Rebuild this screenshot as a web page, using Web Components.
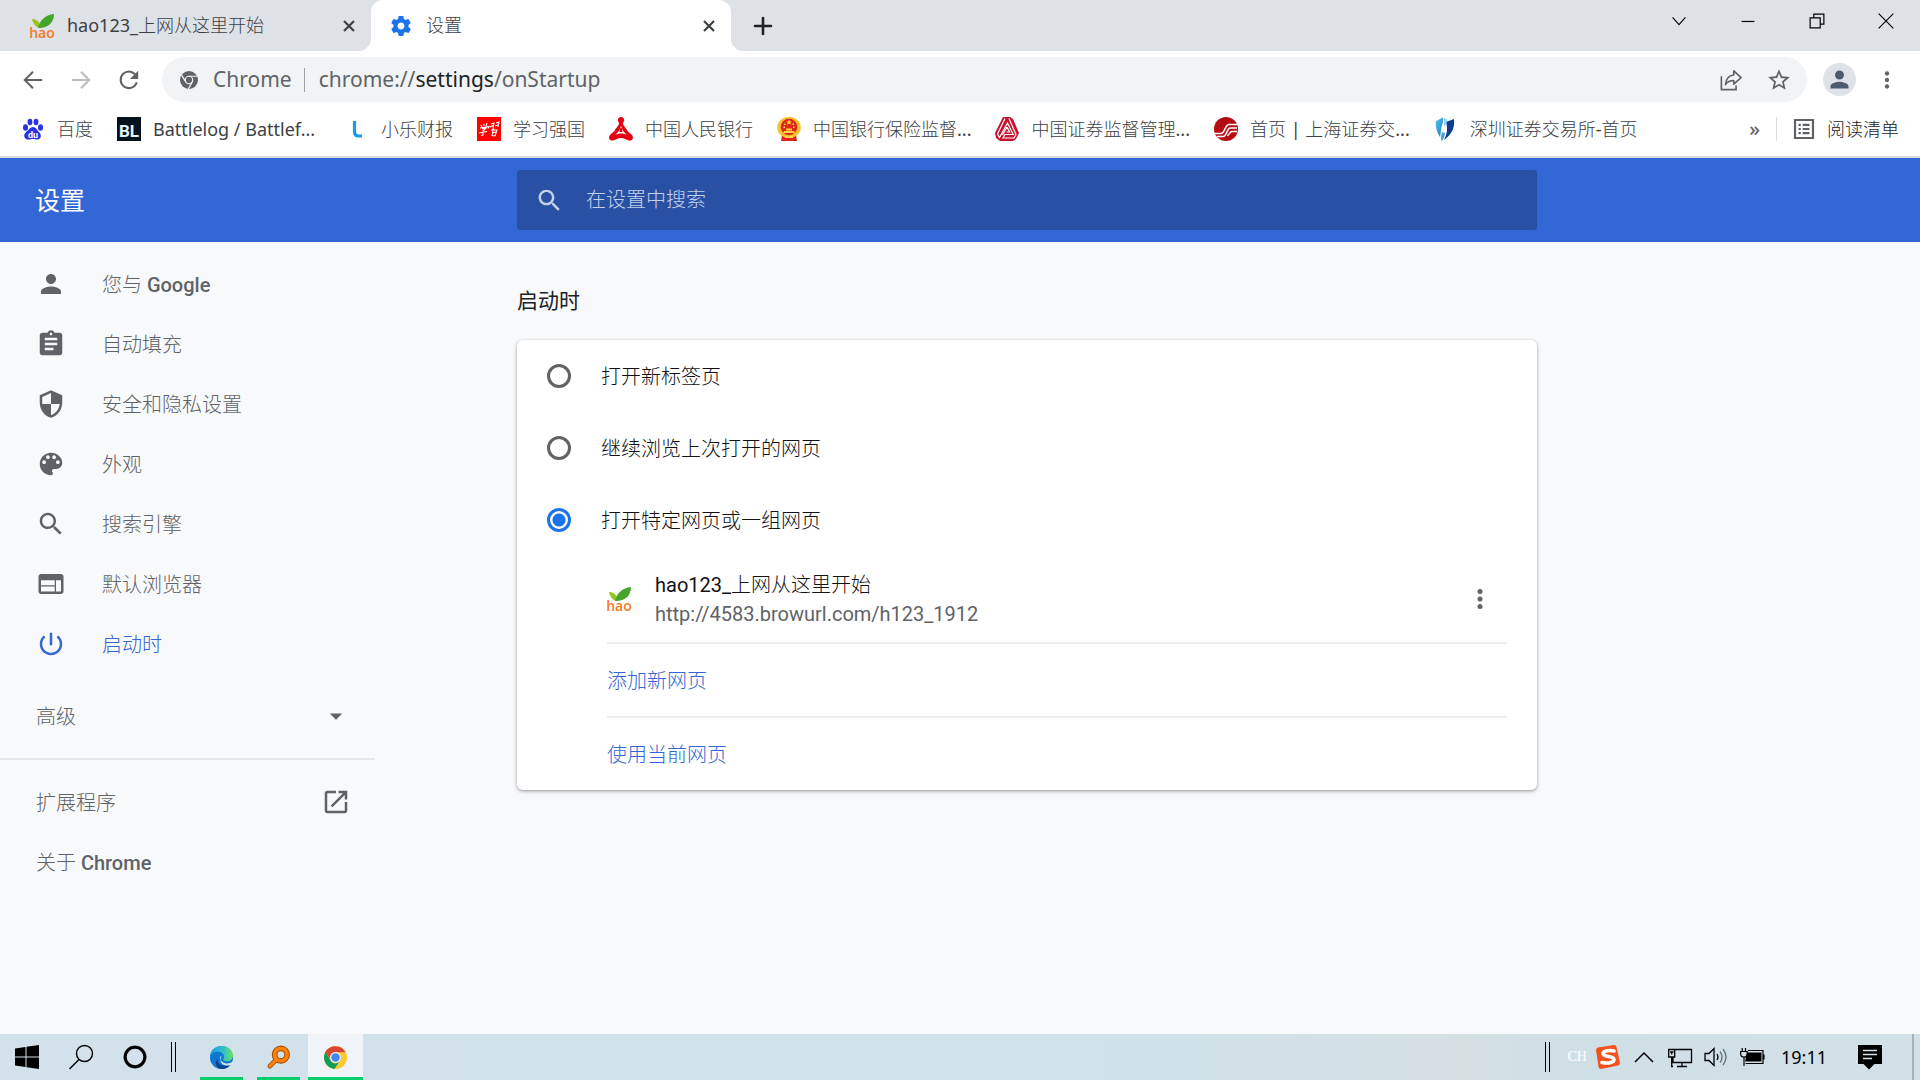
<!DOCTYPE html>
<html lang="zh-CN">
<head>
<meta charset="utf-8">
<title>设置</title>
<style>
html,body{height:100%;margin:0}
body{font-family:"Noto Sans","Noto Sans CJK SC",sans-serif;background:#f8f9fb;color:#202124}
</style>
</head>
<body>
<browser-window></browser-window>
<script>
const ICONS={
person:['0 0 24 24','<path fill="currentColor" d="M12 12c2.21 0 4-1.79 4-4s-1.79-4-4-4-4 1.79-4 4 1.79 4 4 4zm0 2c-2.67 0-8 1.34-8 4v2h16v-2c0-2.66-5.33-4-8-4z"/>'],
assignment:['0 0 24 24','<path fill="currentColor" d="M19 3h-4.18C14.4 1.84 13.3 1 12 1c-1.3 0-2.4.84-2.82 2H5c-1.1 0-2 .9-2 2v14c0 1.1.9 2 2 2h14c1.1 0 2-.9 2-2V5c0-1.1-.9-2-2-2zm-7 0c.55 0 1 .45 1 1s-.45 1-1 1-1-.45-1-1 .45-1 1-1zm2 14H7v-2h7v2zm3-4H7v-2h10v2zm0-4H7V7h10v2z"/>'],
shield:['0 0 24 24','<path fill="currentColor" fill-rule="evenodd" d="M12 1L3 5v6c0 5.55 3.84 10.74 9 12 5.160-1.26 9-6.45 9-12V5l-9-4zM12 3.200V12H5V6.300zM12 12h6.930c-.53 4.120-3.280 7.790-6.930 8.930z"/>'],
palette:['0 0 24 24','<path fill="currentColor" d="M12 3c-4.97 0-9 4.030-9 9s4.030 9 9 9c.83 0 1.500-.67 1.500-1.500 0-.39-.15-.74-.39-1.010-.23-.26-.38-.61-.38-.99 0-.83.67-1.500 1.500-1.500H16c2.760 0 5-2.240 5-5 0-4.420-4.030-8-9-8zm-5.500 9c-.83 0-1.500-.67-1.500-1.500S5.670 9 6.500 9 8 9.670 8 10.500 7.330 12 6.500 12zm3-4C8.670 8 8 7.330 8 6.500S8.670 5 9.500 5s1.500.67 1.500 1.500S10.330 8 9.500 8zm5 0c-.83 0-1.500-.67-1.500-1.500S13.670 5 14.500 5s1.500.67 1.500 1.500S15.330 8 14.500 8zm3 4c-.83 0-1.500-.67-1.500-1.500S16.670 9 17.500 9s1.500.67 1.500 1.500-.67 1.500-1.500 1.500z"/>'],
search:['0 0 24 24','<path fill="currentColor" d="M15.5 14h-.79l-.28-.27C15.41 12.59 16 11.11 16 9.5 16 5.91 13.09 3 9.5 3S3 5.91 3 9.5 5.91 16 9.5 16c1.61 0 3.09-.59 4.23-1.57l.27.28v.79l5 4.99L20.49 19l-4.99-5zm-6 0C7.01 14 5 11.99 5 9.5S7.01 5 9.5 5 14 7.01 14 9.5 11.99 14 9.5 14z"/>'],
web:['0 0 24 24','<path fill="currentColor" d="M20 4H4c-1.1 0-1.99.9-1.99 2L2 18c0 1.1.9 2 2 2h16c1.1 0 2-.9 2-2V6c0-1.100-.9-2-2-2zm-5 14H4v-4h11v4zm0-5H4V9h11v4zm5 5h-4V9h4v9z"/>'],
power:['0 0 24 24','<path fill="currentColor" d="M13 3h-2v10h2V3zm4.83 2.17l-1.42 1.42C17.99 7.86 19 9.81 19 12c0 3.87-3.13 7-7 7s-7-3.13-7-7c0-2.19 1.01-4.14 2.58-5.42L6.17 5.17C4.23 6.82 3 9.26 3 12c0 4.97 4.03 9 9 9s9-4.03 9-9c0-2.74-1.23-5.18-3.17-6.83z"/>'],
drop:['0 0 24 24','<path fill="currentColor" d="M7 10l5 5 5-5z"/>'],
open:['0 0 24 24','<path fill="currentColor" d="M19 19H5V5h7V3H5c-1.11 0-2 .9-2 2v14c0 1.1.89 2 2 2h14c1.1 0 2-.9 2-2v-7h-2v7zM14 3v2h3.59l-9.83 9.83 1.41 1.41L19 6.41V10h2V3h-7z"/>'],
more:['0 0 24 24','<g fill="currentColor"><circle cx="12" cy="6" r="2"/><circle cx="12" cy="12" r="2"/><circle cx="12" cy="18" r="2"/></g>'],
gear:['0 0 24 24','<path fill="currentColor" d="M19.43 12.98c.04-.32.07-.64.07-.98s-.03-.66-.07-.98l2.11-1.65c.19-.15.24-.42.12-.64l-2-3.46c-.12-.22-.39-.3-.61-.22l-2.49 1c-.52-.4-1.08-.73-1.69-.98l-.38-2.65C14.46 2.18 14.25 2 14 2h-4c-.25 0-.46.18-.49.42l-.38 2.65c-.61.25-1.17.59-1.69.98l-2.49-1c-.23-.09-.49 0-.61.22l-2 3.46c-.13.22-.07.49.12.64l2.11 1.65c-.04.32-.07.65-.07.98s.03.66.07.98l-2.11 1.65c-.19.15-.24.42-.12.64l2 3.46c.12.22.39.3.61.22l2.49-1c.52.4 1.08.73 1.69.98l.38 2.65c.03.24.24.42.49.42h4c.25 0 .46-.18.49-.42l.38-2.65c.61-.25 1.17-.59 1.69-.98l2.49 1c.23.09.49 0 .61-.22l2-3.46c.12-.22.07-.49-.12-.64l-2.11-1.65zM12 15.500c-1.930 0-3.500-1.570-3.500-3.500s1.570-3.500 3.500-3.500 3.500 1.570 3.500 3.500-1.570 3.500-3.500 3.500z"/>'],
star:['0 0 24 24','<path fill="currentColor" d="M22 9.24l-7.19-.62L12 2 9.19 8.63 2 9.24l5.46 4.73L5.82 21 12 17.27 18.18 21l-1.63-7.03L22 9.24zM12 15.4l-3.76 2.27 1-4.28-3.32-2.88 4.38-.38L12 6.1l1.71 4.04 4.38.38-3.32 2.88 1 4.28L12 15.4z"/>'],
back:['0 0 24 24','<path fill="none" stroke="currentColor" stroke-width="2.200" d="M22 12H3.500M12 3L3 12l9 9"/>'],
forward:['0 0 24 24','<path fill="none" stroke="currentColor" stroke-width="2.200" d="M2 12h18.500M12 3l9 9-9 9"/>'],
reload:['0 0 24 24','<path fill="none" stroke="currentColor" stroke-width="2.200" d="M20.500 14.500A9 9 0 1 1 19.800 7.500"/><path fill="currentColor" d="M22 2v9h-9z"/>'],
close:['0 0 24 24','<path fill="none" stroke="currentColor" stroke-width="2.600" d="M6 6l12 12M18 6L6 18"/>'],
plus:['0 0 24 24','<path fill="none" stroke="currentColor" stroke-width="2.600" stroke-linecap="round" d="M12 4v16M4 12h16"/>'],
chevron:['0 0 24 24','<path fill="none" stroke="currentColor" stroke-width="1.200" d="M5 8l7 8 7-8"/>'],
minimize:['0 0 24 24','<path fill="none" stroke="currentColor" stroke-width="1.300" d="M5 12.500h14"/>'],
restore:['0 0 24 24','<path fill="none" stroke="currentColor" stroke-width="1.300" d="M8.500 8.500V4.500h11v11h-4M4.500 8.500h11v11h-11z"/>'],
winclose:['0 0 24 24','<path fill="none" stroke="currentColor" stroke-width="1.200" d="M4 4l16 16M20 4L4 20"/>'],
share:['0 0 24 24','<path fill="none" stroke="currentColor" stroke-width="1.800" d="M1.500 8v14.500h16V18"/><path fill="none" stroke="currentColor" stroke-width="1.800" stroke-linejoin="round" d="M15 2l8 7.500-8 7V12.500c-4 0-7 1.500-9 4.500C6.500 11 9.500 7 15 6.500z"/>'],
list:['0 0 24 24','<path fill="none" stroke="currentColor" stroke-width="2.400" d="M2.200 2.200h19.600v19.600H2.200z"/><path stroke="currentColor" stroke-width="2.200" d="M6 7.500h2.500M10.500 7.500H18M6 12h2.500M10.500 12H18M6 16.500h2.500M10.500 16.500H18"/>'],
chromegrey:['0 0 24 24','<circle cx="12" cy="12" r="12" fill="#5f6368"/><g fill="none" stroke="#f1f3f4" stroke-width="1.600"><circle cx="12" cy="12" r="5"/><path d="M12 7h11M7.700 14.500L2.200 5.500M16.300 14.500l-5.300 9.500"/></g>'],
hao:['0 0 24 24','<path fill="#97c51c" d="M2 5c4 0 8 2 9 9-4 0-7-2-9-9z"/><path fill="#45a42c" d="M8 14C10 6 15 1 24 0c0 8-5 14-16 14z"/><text x="12" y="24" text-anchor="middle" font-size="14" font-weight="600" font-family="Open Sans" fill="#f37a21">hao</text>'],
baidu:['0 0 24 24','<g fill="#2932e1"><ellipse cx="4.500" cy="10.500" rx="2.500" ry="3.200"/><ellipse cx="9" cy="5" rx="2.400" ry="3.200"/><ellipse cx="15" cy="5" rx="2.400" ry="3.200"/><ellipse cx="19.500" cy="10.500" rx="2.500" ry="3.200"/><path d="M12 10c3 0 4 3 6 5 3 3 2 7-1 7.500-2 .4-3-.4-5-.4s-3 .8-5 .4C3 22 2 18 5 15c3-2 4-5 7-5z"/></g><text x="12" y="20.500" text-anchor="middle" font-size="9" font-weight="700" font-family="Roboto" fill="#fff">du</text>'],
bl:['0 0 24 24','<path fill="#06131f" d="M0 0h24v24H0z"/><text x="12" y="20" text-anchor="middle" font-size="17" font-weight="700" font-family="Roboto" fill="#e4f4fb">BL</text>'],
l:['0 0 24 24','<path fill="none" stroke="#1a9be6" stroke-width="3.200" d="M9.500 4v11q0 4 4 4H17"/>'],
xue:['0 0 24 24','<path fill="#f00" d="M0 0h24v24H0z"/><g fill="none" stroke="#fff" stroke-width="1.100"><path d="M4 8l1 2M7 7v2M10 6L9 9M3 11l9-1.500-1 2M5 12l4-1-3 3v4l-2 .5M2 16l8-1.500M14 7l3-1-1 5M13 10l3-1.500M19 6l3-1-1 5M18 9l3-1M17 11l-2 2h5l-2 6-3-.5 1-5M15 16l4-1"/></g>'],
pboc:['0 0 24 24','<path fill="#e60012" d="M12 0c2 0 3.200 1.200 3.200 3.500L14 6c0 3 3 4.500 4.500 8l4.500 4c2 3 .5 5.500-2 5.500-3.500 0-5-2.500-9-2.500s-5.500 2.500-9 2.500c-2.500 0-4-2.500-2-5.500l4.500-4C7 10.500 10 9 10 6L8.800 3.500C8.800 1.200 10 0 12 0z"/><path fill="#fff" d="M12 8.500c.5 4 3 7 5.500 9-2-.5-3.500-1-5.500-1s-3.500.5-5.500 1c2.500-2 5-5 5.500-9z"/><path fill="#e60012" d="M11.300 11h1.400l.8 4h-3z"/>'],
emblem:['0 0 24 24','<path fill="#e2231a" d="M5 18h14l1 6H4z"/><ellipse cx="12" cy="10.500" rx="11.800" ry="10.500" fill="#f2c230"/><circle cx="12" cy="10" r="8.300" fill="#e2231a"/><path fill="#ffd83d" d="M12 2.500l.9 2h2l-1.600 1.300.6 2L12 6.700l-1.900 1.100.6-2L9.100 4.500h2zM7 14h10l1 2H6zM9 11.500h6v2H9zM7 6.500h1.500V8H7zM15.500 6.500H17V8h-1.500zM6.500 9.500H8V11H6.500zM16 9.500h1.500V11H16zM8 19h8v2H8z"/>'],
csrc:['0 0 24 24','<path fill="#c4122f" d="M8 0h7l3 2 6 14-3 6-3 2H5l-4-3-1-5z"/><g fill="none" stroke="#fff" stroke-width="1.200"><path d="M10 1.500L2.500 17l2 3.500L12.500 6l5.500 11M14 1.500l7 16-2 3.500H8l2-3.500h9M12 10l-4.500 8M12 10l2.500 5h-3"/></g>'],
sse:['0 0 24 24','<circle cx="12" cy="12" r="12" fill="#b30d12"/><g fill="none" stroke="#fff" stroke-width="1.600"><path d="M1 16.500h6c4 0 4-9 8-9h8M3 19.500h6c4 0 4-8.500 7-8.500h7M13 18.500c3 0 2-4 5-4h5"/></g>'],
szse:['0 0 24 24','<defs><linearGradient id="b" x1="0" y1="0" x2="1" y2="1"><stop stop-color="#5cc8ee"/><stop offset="1" stop-color="#1478c8"/></linearGradient></defs><path fill="url(#b)" d="M2 4l7-3.500C10 5 7 9 7 14l-1 6C3 16 1 9 2 4z"/><path fill="#0c3f91" d="M12 5l8-3c1 9-2 15-10 21 3-6 4-11 2-18z"/><path fill="#8fd6f3" d="M10 1l3 1c0 3-1 6-3 8z"/><path fill="#49a6dc" d="M8 15l3 1c0 3-1 5-3 8-2-2-1-5 0-9z"/>'],
start:['0 0 24 24','<path d="M0 3.500L10.500 2v9.500H0zM11.500 1.800L24 0v11.500H11.500zM0 12.500h10.500V22L0 20.500zM11.500 12.500H24V24l-12.500-1.800z"/>'],
tasksearch:['0 0 24 24','<g fill="none" stroke="#000" stroke-width="1.400"><circle cx="15.500" cy="8.500" r="8"/><path d="M10 14.500L.5 24"/></g>'],
cortana:['0 0 24 24','<circle cx="12" cy="12" r="9.800" fill="none" stroke="#000" stroke-width="3"/><circle cx="12" cy="12" r="11.300" fill="none" stroke="#000" stroke-opacity=".3"/>'],
edge:['0 0 24 24','<defs><linearGradient id="a" x2="1"><stop stop-color="#1b9de2"/><stop offset=".6" stop-color="#35c1c9"/><stop offset="1" stop-color="#6be34f"/></linearGradient></defs><circle cx="12" cy="12" r="12" fill="#0b78d4"/><path fill="url(#a)" d="M0 11C1 4 6 0 12 0c7 0 12 5 12 10 0 4-3 6-6 6-3 0-5-1-4-3 2-4-2-7-6-7-4 0-7 2-8 5z"/><path fill="#103f86" d="M8 13c-1 6 5 10 14 6-3 4-7 5-10 5-5-1-8-6-4-11z"/><path fill="#d3e1e8" d="M12 10c-3 2-1 7 4 8 3 .5 6 0 8-2v2l-2 2c-4 1-11 0-11-5z"/>'],
finder:['0 0 24 24','<g fill="none" stroke-linecap="round"><path stroke="#9a4608" stroke-width="5" d="M10 14l-7 7"/><circle cx="14.500" cy="9" r="6.500" stroke="#9a4608" stroke-width="6"/><circle cx="14.500" cy="9" r="6.500" stroke="#ff7f0a" stroke-width="4"/><path stroke="#ff7f0a" stroke-width="3.300" d="M10 14l-7 7"/></g>'],
chrome:['0 0 24 24','<circle cx="12" cy="12" r="12" fill="#fcc934"/><path fill="#db4437" d="M1.600 6A12 12 0 0 1 22.400 6.500H12a5.500 5.500 0 0 0-5 8z"/><path fill="#0f9d58" d="M1.600 6A12 12 0 0 0 11 24l5.500-8.500a5.500 5.500 0 0 1-9.500 0z"/><circle cx="12" cy="12" r="5.700" fill="#f1f4f8"/><circle cx="12" cy="12" r="4.400" fill="#4285f4"/>'],
sogou:['0 0 24 24','<path fill="#f4511e" d="M0 5q0-2 2-2.500L18 0q2 0 2.500 2L24 18q0 2-2 2.500L5 24q-2 0-2.500-2z"/><path fill="none" stroke="#fff" stroke-width="3.600" stroke-linecap="round" d="M18 6c-4-1-11-.5-11 2.500 0 4 11 2 11 6 0 3.500-7 4-12 3"/>'],
caret:['0 0 24 24','<path fill="none" stroke="#000" stroke-width="1.500" d="M3 17l9-9 9 9"/>'],
network:['0 0 24 24','<path fill="none" stroke="#000" stroke-width="1.300" d="M6 4.500h17.500v13H5V12M14 17.500V21M9 21.500h10M.7 4.500h6V12h-6zM3.700 12v9.500H5M2 7h3.500M3.700 7v2.500"/>'],
volume:['0 0 24 24','<g fill="none" stroke="#000" stroke-width="1.300"><path d="M1 8.500h4l5-5v17l-5-5H1z"/><path d="M13 9q2 3 0 6"/><path stroke-opacity=".5" d="M16 6.500q4 5.500 0 11M19 4q6 8 0 16"/></g>'],
battery:['0 0 24 24','<path d="M7 7.500h14.500v9H5z"/><path fill="none" stroke="#000" stroke-width="1.200" d="M8 5.500h15v13H5.500M24 9.500v5M.7 6.500h6.500v3q0 2.500-3.200 2.500T.7 9.500zM2.200 6.500V3M5.500 6.500V3M4 12v9"/>'],
notice:['0 0 24 24','<path d="M0 0h24v19h-7.500L11 24.500 5.500 19H0z"/><path stroke="#d3e1e8" stroke-width="1.300" d="M5 5.500h14M5 9.500h14M5 13.500h9"/>']
};
/* Registers an element whose shadow root is cloned from a template. */
function define(tag,css,html,setup){
  const t=document.createElement('template');
  t.innerHTML=`<style>*{box-sizing:border-box}button{font:inherit;color:inherit;background:none;border:0;padding:0;margin:0;text-align:left}a{color:inherit;text-decoration:none}b{font-weight:400}${css}</style>${html}`;
  customElements.define(tag,class extends HTMLElement{
    connectedCallback(){
      if(this.shadowRoot)return;
      this.attachShadow({mode:'open'}).append(t.content.cloneNode(true));
      if(setup)setup(this,this.shadowRoot);
    }
  });
}
define('ui-icon',':host{display:inline-block;flex:none;width:24px;height:24px}svg{display:block;width:100%;height:100%;overflow:visible}','<svg aria-hidden="true"></svg>',(el,r)=>{
  const [box,body]=ICONS[el.getAttribute('name')];
  const s=r.querySelector('svg');s.setAttribute('viewBox',box);s.innerHTML=body;
});
define('icon-button',':host{display:flex;flex:none;width:48px;justify-content:center}button{display:flex}ui-icon{width:var(--size,24px);height:var(--size,24px)}','<button type="button"></button>',(el,r)=>{
  const b=r.querySelector('button');b.setAttribute('aria-label',el.getAttribute('label'));
  b.innerHTML=`<ui-icon name="${el.getAttribute('icon')}"></ui-icon>`;
});
define('browser-tab',`
:host{display:flex;align-items:center;flex:0 1 360px;height:51px;padding:0 10px 0 19px;color:#3c4043;font-size:18px;position:relative}
:host([active]){background:#fff;border-radius:12px 12px 0 0;padding-left:18px}
:host([active])::before,:host([active])::after{content:"";position:absolute;bottom:0;width:12px;height:12px;background:radial-gradient(circle at 0 0,transparent 12px,#fff 12px)}
:host([active])::before{left:-12px}
:host([active])::after{right:-12px;transform:scaleX(-1)}
span{flex:1;margin-left:13px;padding-bottom:2px;line-height:24px;white-space:nowrap}
icon-button{width:24px;--size:20px}`,'<slot name="icon"></slot><span><slot></slot></span><icon-button icon="close" label="关闭"></icon-button>');
define('tab-strip',`
:host{display:flex;background:#dee1e6;height:51px;padding-left:11px}
.new{width:64px;align-self:center;--size:24px}
.win{margin-left:auto;display:flex;height:42px;align-items:center;color:#000}
.win icon-button{width:69px;--size:22px}`,`
<browser-tab><ui-icon slot="icon" name="hao"></ui-icon><b>hao123_</b>上网从这里开始</browser-tab>
<browser-tab active><ui-icon slot="icon" name="gear" style="color:#1a73e8"></ui-icon>设置</browser-tab>
<icon-button class="new" icon="plus" label="新标签页"></icon-button>
<div class="win"><icon-button icon="chevron" label="搜索标签页"></icon-button><icon-button icon="minimize" label="最小化"></icon-button><icon-button icon="restore" label="还原"></icon-button><icon-button icon="winclose" label="关闭窗口"></icon-button></div>`);
define('tool-bar',`
:host{display:flex;align-items:center;background:#fff;color:#5f6368;padding:6px 9px;height:57px}
icon-button{--size:22px}
.big{--size:26px}
.off{color:#babcbe}
.box{flex:1;display:flex;align-items:center;height:45px;margin:0 9px;padding:0 4px 0 18px;border-radius:23px;background:#f1f3f4;font-size:21px;font-weight:400;line-height:30px}
.box ui-icon{width:18px;height:18px;margin-right:15px}
.box span{padding-bottom:2px}
.box .sep{width:1px;height:24px;padding:0;background:#9aa0a6;margin:0 14px 0 12px}
.url{flex:1;outline:0;white-space:nowrap}
b{color:#202124}
.face{width:33px;height:33px;border-radius:50%;background:#dee1e6;color:#4e5a70;display:flex;align-items:center;justify-content:center;margin:0 7px}
.face ui-icon{width:27px;height:27px}`,`
<icon-button icon="back" label="后退"></icon-button><icon-button class="off" icon="forward" label="前进"></icon-button><icon-button icon="reload" label="重新加载"></icon-button>
<div class="box"><ui-icon name="chromegrey"></ui-icon><span>Chrome</span><span class="sep"></span><span class="url" role="textbox" aria-label="地址栏" contenteditable="true" spellcheck="false">chrome://<b>settings</b>/onStartup</span><icon-button icon="share" label="分享"></icon-button><icon-button class="big" icon="star" label="添加书签"></icon-button></div>
<button class="face" type="button" aria-label="用户"><ui-icon name="person"></ui-icon></button><icon-button class="big" icon="more" label="更多"></icon-button>`);
define('book-mark',':host{display:block;flex:none}a{display:flex;align-items:center;gap:12px;white-space:nowrap}','<a href="#"><slot name="icon"></slot><span><slot></slot></span></a>');
define('bookmarks-bar',`
:host{display:flex;align-items:center;gap:24px;height:50px;padding:0 21px 6px 21px;background:#fff;border-bottom:2px solid #d9dbde;color:#3c4043;font-size:18px;line-height:24px;box-sizing:border-box}
.wide{min-width:204px}
.more{margin-left:auto;color:#5f6368;font-size:20px;font-weight:500}
.read{display:flex;align-items:center;gap:12px;border-left:1px solid #dadce0;padding-left:16px;color:#202124;margin-left:-8px}
.read ui-icon{color:#5f6368;width:22px;height:22px}`,`
<book-mark><ui-icon slot="icon" name="baidu"></ui-icon>百度</book-mark>
<book-mark class="wide"><ui-icon slot="icon" name="bl"></ui-icon><b>Battlelog / Battlef...</b></book-mark>
<book-mark><ui-icon slot="icon" name="l"></ui-icon>小乐财报</book-mark>
<book-mark><ui-icon slot="icon" name="xue"></ui-icon>学习强国</book-mark>
<book-mark><ui-icon slot="icon" name="pboc"></ui-icon>中国人民银行</book-mark>
<book-mark><ui-icon slot="icon" name="emblem"></ui-icon>中国银行保险监督<b>...</b></book-mark>
<book-mark><ui-icon slot="icon" name="csrc"></ui-icon>中国证券监督管理<b>...</b></book-mark>
<book-mark><ui-icon slot="icon" name="sse"></ui-icon>首页<b> | </b>上海证券交<b>...</b></book-mark>
<book-mark><ui-icon slot="icon" name="szse"></ui-icon>深圳证券交易所<b>-</b>首页</book-mark>
<button class="more" type="button" aria-label="更多书签">»</button>
<button class="read" type="button"><ui-icon name="list"></ui-icon>阅读清单</button>`);
const COLUMNS='display:grid;grid-template-columns:minmax(375px,517px) minmax(0,1020px) 1fr;';
define('settings-header',`
:host{${COLUMNS}align-items:center;height:84px;background:#3367d6;color:#fff}
h1{margin:0;padding:4px 0 0 35px;font-size:25px;line-height:36px;font-weight:400}
label{display:flex;align-items:center;height:60px;border-radius:3px;background:#2851a6;color:#c5d1ea;padding-left:18px}
ui-icon{width:29px;height:29px}
input{flex:1;margin-left:20px;border:0;outline:0;background:none;color:#fff;font:300 20px/30px Roboto,"Noto Sans CJK SC",sans-serif}
input::placeholder{color:#c5d1ea;opacity:1}`,'<h1>设置</h1><label><ui-icon name="search"></ui-icon><input type="text" placeholder="在设置中搜索" aria-label="在设置中搜索"></label>');
define('nav-item',`
:host{display:block;color:#5f6368}
:host([selected]){color:#3367d6}
a{display:flex;align-items:center;height:60px;padding:0 36px}
span{padding-top:2px}
slot[name=icon]::slotted(ui-icon){width:30px;height:30px;margin-right:36px}
slot[name=end]::slotted(ui-icon){width:30px;height:30px;margin:0 -12px 0 auto}`,'<a href="#"><slot name="icon"></slot><span><slot></slot></span><slot name="end"></slot></a>');
define('settings-nav',`
:host{display:block;width:375px;padding-top:12px;font-size:20px;line-height:30px}
nav{display:block}
b{font-weight:500}
hr{height:2px;border:0;margin:12px 0;background:#e4e6e8}
.adv{margin-top:12px}
ui-icon{width:30px;height:30px}`,`
<nav>
<nav-item><ui-icon slot="icon" name="person"></ui-icon>您与 <b>Google</b></nav-item>
<nav-item><ui-icon slot="icon" name="assignment"></ui-icon>自动填充</nav-item>
<nav-item><ui-icon slot="icon" name="shield"></ui-icon>安全和隐私设置</nav-item>
<nav-item><ui-icon slot="icon" name="palette"></ui-icon>外观</nav-item>
<nav-item><ui-icon slot="icon" name="search"></ui-icon>搜索引擎</nav-item>
<nav-item><ui-icon slot="icon" name="web"></ui-icon>默认浏览器</nav-item>
<nav-item selected><ui-icon slot="icon" name="power"></ui-icon>启动时</nav-item>
<nav-item class="adv">高级<ui-icon slot="end" name="drop"></ui-icon></nav-item>
<hr>
<nav-item>扩展程序<ui-icon slot="end" name="open"></ui-icon></nav-item>
<nav-item>关于 <b>Chrome</b></nav-item>
</nav>`);
define('radio-option',`
:host{display:block}
label{display:flex;align-items:center;height:72px;padding-left:30px;gap:30px}
span{padding-top:2px}
input{appearance:none;flex:none;width:24px;height:24px;margin:0;border:3px solid #5f6368;border-radius:50%;background:#fff}
input:checked{border-color:#1a73e8;background:radial-gradient(circle,#1a73e8 6px,#fff 7px)}`,'<label><input type="radio" name="startup"><span><slot></slot></span></label>',(el,r)=>{
  const i=r.querySelector('input');i.checked=el.hasAttribute('checked');
  i.addEventListener('change',()=>{for(const o of el.parentNode.querySelectorAll('radio-option'))if(o!==el)o.shadowRoot.querySelector('input').checked=false;});
});
define('startup-card',`
:host{display:block;background:#fff;border-radius:6px;box-shadow:0 1px 3px rgba(60,64,67,.4),0 2px 5px rgba(60,64,67,.15);font-size:20px;line-height:30px;color:#111214}
.list{padding:0 30px 0 90px}
.row{display:flex;align-items:center;height:72px;border-top:2px solid #eee;color:#3367d6}
.row a{padding-top:2px}
.row+.row{height:74px}
.page{height:86px;border:0;color:#111214}
.page ui-icon{margin-right:24px}
.page div{flex:1}
.page p{margin:0;line-height:30px}
.page small{display:block;font-size:20px;font-weight:400;line-height:29px;color:#5f6368}
.page icon-button{width:54px;color:#5f6368;--size:30px}`,`
<radio-option>打开新标签页</radio-option>
<radio-option>继续浏览上次打开的网页</radio-option>
<radio-option checked>打开特定网页或一组网页</radio-option>
<div class="list">
<div class="row page"><ui-icon name="hao"></ui-icon><div><p><b>hao123_</b>上网从这里开始</p><small>http://4583.browurl.com/h123_1912</small></div><icon-button icon="more" label="更多操作"></icon-button></div>
<div class="row"><a href="#">添加新网页</a></div>
<div class="row"><a href="#">使用当前网页</a></div>
</div>`);
define('settings-page',`
:host{display:flex;flex-direction:column;flex:1;background:#f8f9fb;font-family:Roboto,"Noto Sans CJK SC",sans-serif;font-weight:300}
main{${COLUMNS}}
h2{margin:0 0 24px;padding-top:44px;font-size:21px;line-height:30px;font-weight:400}`,`
<settings-header></settings-header>
<main><settings-nav></settings-nav><section><h2>启动时</h2><startup-card></startup-card></section></main>`);
define('task-bar',`
:host{display:flex;align-items:center;height:46px;padding-right:6px;background:linear-gradient(90deg,#d3e2ea 0,#d0e1e9 60%,#d4dfe2 76%,#cfdfe6 82%,#d2e1e7 100%);color:#000}
button{display:flex;flex:none;align-items:center;justify-content:center;width:54px;height:46px}
.app{width:43px;margin-right:14px;border-bottom:3px solid #00cf6b;padding-top:3px}
.app.on{width:55px;margin-left:-6px;background:#f0f4f9}
.app ui-icon{width:23px;height:23px}
.grip{flex:none;width:5px;height:30px;border:1px solid #000;border-width:0 1px}
.start{margin:0 24px 0 9px}
.ch{color:#fff;font:400 14px/24px "Liberation Serif",serif;margin-left:18px}
.tray{display:flex;align-items:center;margin-left:auto}
.tray button{width:36px}
.tray .s{margin-left:3px}
.tray .clock{width:auto;font-size:18px;font-weight:400;margin:0 25px 0 11px}
.edge{width:2px;height:46px;background:#a4b1b9;margin-left:24px}`,`
<button type="button" aria-label="开始"><ui-icon name="start"></ui-icon></button>
<button type="button" aria-label="搜索"><ui-icon name="tasksearch"></ui-icon></button>
<button type="button" aria-label="Cortana"><ui-icon name="cortana"></ui-icon></button>
<span class="grip start"></span>
<button class="app" type="button" aria-label="Edge"><ui-icon name="edge"></ui-icon></button>
<button class="app" type="button" aria-label="查找"><ui-icon name="finder"></ui-icon></button>
<button class="app on" type="button" aria-label="Chrome"><ui-icon name="chrome"></ui-icon></button>
<div class="tray"><span class="grip"></span><span class="ch">CH</span>
<button class="s" type="button" aria-label="输入法"><ui-icon name="sogou"></ui-icon></button><button type="button" aria-label="显示隐藏的图标"><ui-icon name="caret"></ui-icon></button><button type="button" aria-label="网络"><ui-icon name="network"></ui-icon></button><button type="button" aria-label="音量"><ui-icon name="volume"></ui-icon></button><button type="button" aria-label="电池"><ui-icon name="battery"></ui-icon></button><button class="clock" type="button">19:11</button><button type="button" aria-label="通知"><ui-icon name="notice"></ui-icon></button><span class="edge"></span></div>`);
define('browser-window',':host{display:flex;flex-direction:column;min-height:100vh;font-weight:300}','<tab-strip></tab-strip><tool-bar></tool-bar><bookmarks-bar></bookmarks-bar><settings-page></settings-page><task-bar></task-bar>');
</script>
</body>
</html>
